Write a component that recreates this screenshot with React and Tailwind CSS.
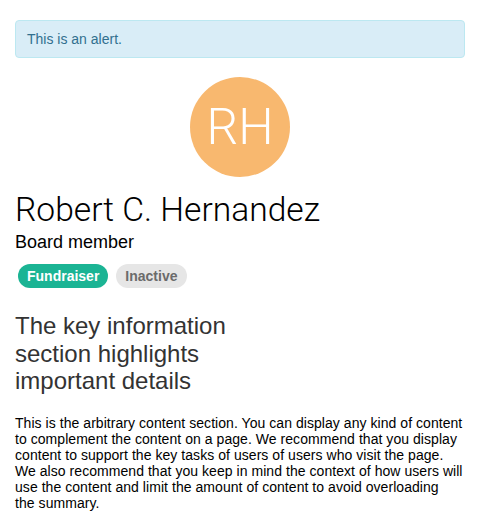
export default function App() {
  return (
    <div className="min-h-[531px] bg-white px-[15px] pt-[20px] text-black" style={{ fontFamily: '"Liberation Sans", Arial, sans-serif' }}>
      <div className="rounded-[4px] border border-[#bce8f1] bg-[#d9edf7] px-[11px] py-[8px] text-[14px] leading-[20px] text-[#31708f]">
        This is an alert.
      </div>
      <div className="mt-[19px] flex justify-center">
        <div className="flex h-[100px] w-[100px] items-center justify-center rounded-full bg-[#f8b86f] text-[50px] font-light text-white" style={{ fontFamily: 'Roboto, "Liberation Sans", sans-serif' }}>
          RH
        </div>
      </div>
      <h1 className="mt-[15px] text-[33.6px] font-light leading-[36px] text-black" style={{ fontFamily: 'Roboto, "Liberation Sans", sans-serif' }}>Robert C. Hernandez</h1>
      <div className="mt-[4px] text-[18px] leading-[20px] text-black">Board member</div>
      <div className="mt-[12px] flex gap-[8px] pl-[3px]">
        <span className="rounded-full bg-[#1bb494] px-[9px] text-[14px] font-bold leading-[24px] text-white">Fundraiser</span>
        <span className="rounded-full bg-[#e6e6e6] px-[9px] text-[14px] font-bold leading-[24px] text-[#6b6b6b]">Inactive</span>
      </div>
      <h2 className="mt-[24px] w-[240px] text-[24px] leading-[27.5px] text-[#333]">
        The key information section highlights important details
      </h2>
      <p className="mt-[20px] text-[14px] leading-[16px] tracking-[0.05px] text-black">
        This is the arbitrary content section. You can display any kind of content to complement the content on a page. We recommend that you display content to support the key tasks of users of users who visit the page. We also recommend that you keep in mind the context of how users will use the content and limit the amount of content to avoid overloading the{"\u00a0"}summary.
      </p>
    </div>
  );
}
